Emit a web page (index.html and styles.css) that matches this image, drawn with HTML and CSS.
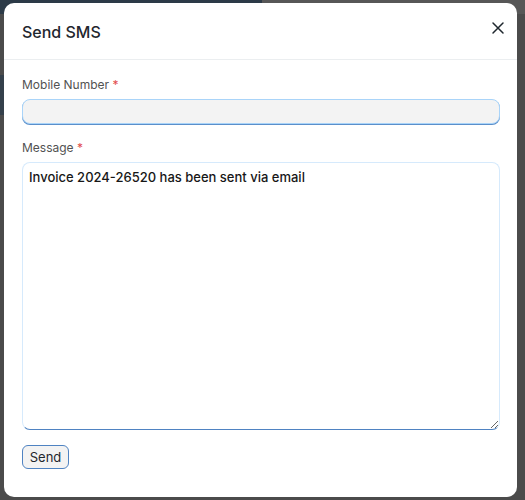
FILE: index.html
```html
<!DOCTYPE html>
<html lang="en">
<head>
<meta charset="utf-8">
<title>Send SMS</title>
<link rel="stylesheet" href="styles.css">
</head>
<body>
<div class="backdrop">
  <div class="nav">
    <div class="nav-left"></div>
    <div class="nav-right"></div>
  </div>
  <div class="band"></div>
</div>
<div class="modal">
  <div class="modal-header">
    <h4 class="modal-title">Send SMS</h4>
    <button class="close" aria-label="Close">
      <svg width="14" height="14" viewBox="0 0 14 14"><path d="M2 2L12 12M12 2L2 12" stroke="#1f272e" stroke-width="1.5" stroke-linecap="round"/></svg>
    </button>
  </div>
  <div class="modal-body">
    <div class="field">
      <label class="label">Mobile Number <span class="req">*</span></label>
      <input class="input" type="text">
    </div>
    <div class="field">
      <label class="label">Message <span class="req">*</span></label>
      <textarea class="textarea">Invoice 2024-26520 has been sent via email</textarea>
    </div>
    <button class="btn">Send</button>
  </div>
</div>
</body>
</html>
```
FILE: styles.css
```css
* { box-sizing: border-box; }
html, body { margin: 0; height: 100%; }
body {
  background: #4b4b4b;
  font-family: Inter, "Noto Sans", sans-serif;
  overflow: hidden;
}
.backdrop { position: absolute; inset: 0; }
.nav { display: flex; height: 14px; }
.nav-left { width: 262px; background: #2c3a47; }
.nav-right { flex: 1; background: #575757; }
.band {
  position: absolute; left: 0; top: 75px; width: 4px; height: 40px; background: #34404b;
}
.modal {
  position: absolute; left: 4px; top: 3px; width: 513px; height: 494px;
  background: #fff; border-radius: 10px; display: flex; flex-direction: column;
}
.modal-header {
  height: 57px; border-bottom: 1px solid #ebeef0;
  display: flex; align-items: center; justify-content: space-between;
  padding: 0 11px 0 18px;
}
.modal-title {
  margin: 0; font-size: 16px; font-weight: 500; color: #1f272e;
  padding-top: 2px;
}
.close {
  border: 0; background: none; padding: 0; width: 16px; height: 16px;
  display: flex; align-items: center; justify-content: center;
  margin-top: -6px; cursor: pointer;
}
.modal-body { padding: 17px 17px 0 18px; }
.field { display: flex; flex-direction: column; margin-bottom: 16px; }
.label {
  font-size: 12px; color: #525252; line-height: 16px; margin-bottom: 6px;
}
.req { color: #e24c4c; }
.input {
  height: 25px; width: 100%; background: #f3f3f3;
  border: 1px solid #a9d4f9; border-radius: 8px;
  box-shadow: 0 1px 0 0 #5b8fca; outline: none;
}
.textarea {
  width: 100%; height: 268px; resize: vertical;
  border: 1px solid #d6eafc; border-bottom: 1px solid #4f83c2;
  border-radius: 8px; padding: 5px 6px;
  font-family: Inter, "Noto Sans", sans-serif; font-size: 13px; font-weight: 500;
  color: #171717; line-height: 18px; outline: none;
}
.field + .field { margin-bottom: 15px; }
.btn {
  height: 24px; width: 47px; padding: 0;
  background: #f3f3f3; border: 1px solid #4f83c2; border-radius: 6px;
  font-family: Inter, "Noto Sans", sans-serif; font-size: 13px; color: #1f272e;
}
```
